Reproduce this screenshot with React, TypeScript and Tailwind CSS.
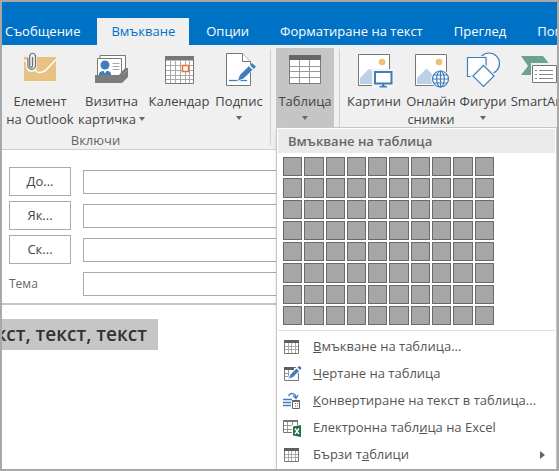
import React from "react";

const tabs = ["Съобщение", "Вмъкване", "Опции", "Форматиране на текст", "Преглед", "Помощ"];

const recipients = [
  { id: "to", label: "До..." },
  { id: "cc", label: "Як..." },
  { id: "bcc", label: "Ск..." },
];

function AttachItemIcon() {
  return (
    <svg className="h-9 w-9 overflow-visible" viewBox="0 0 36 36" fill="none">
      <path d="M2 6h32v24H2z" fill="#e8c282" />
      <path d="M2 9c7 5 9 11 15 12.500C24 22 28 14 34 8.500" stroke="#fff" strokeWidth="1.5" />
      <path d="M10.5 6v9a1.5 1.5 0 01-3 0V5a3 3 0 016 0v10.500a4 4 0 01-8 0V8" stroke="#f0f0f0" strokeWidth="3" />
      <path d="M10.5 6v9a1.4 1.4 0 01-2.800 0V4.5a3 3 0 015.800 0v10a3.8 3.8 0 01-7.600 0V7" stroke="#6f6f6f" strokeWidth="1.2" />
    </svg>
  );
}

function CardIcon() {
  return (
    <svg className="h-9 w-9 overflow-visible" viewBox="0 0 36 36" fill="none">
      <path d="M6 4.5h25.500V23H6z" fill="#fff" stroke="#777" />
      <path d="M3.5 7.5h24v18h-24z" fill="#fff" stroke="#777" />
      <circle cx="11" cy="14" r="4.5" fill="#3f7dbd" />
      <path d="M5 24v-1.500c1-2 3-2.500 4.500-2.500L11 22.500l1.500-2.500c2 0 4 .5 4.500 2.500V24z" fill="#3f7dbd" />
      <path d="M18.5 12.5h7M18.5 15.5h7M18.5 18.5h7" stroke="#aaa" />
      <path d="M1 24h24l6-7h3v9l-6 6H1z" fill="#7c7c7c" />
      <path d="M28.5 24l5-5" stroke="#999" />
    </svg>
  );
}

function CalendarIcon() {
  return (
    <svg className="h-9 w-9" viewBox="0 0 36 36" fill="none">
      <path d="M4.5 5.5h28v27h-28z" fill="#fff" stroke="#777" />
      <path d="M4 5h29v4.500H4z" fill="#777" />
      <path d="M9.5 10v22M14.5 10v22M19.5 10v22M24.5 10v22M28.5 10v22M5 14.5h27M5 19.5h27M5 24.5h27M5 28.5h27" stroke="#aaa" />
      <path d="M21.5 14.5h6v6h-6z" fill="#fff" stroke="#e8762c" strokeWidth="1.5" />
    </svg>
  );
}

function SignatureIcon() {
  return (
    <svg className="h-9 w-9 overflow-visible" viewBox="0 0 36 36" fill="none">
      <path d="M5.5 2.5h16l8 8v24h-24z" fill="#fff" stroke="#777" />
      <path d="M21.5 2.5v8h8" fill="#fff" stroke="#777" />
      <path d="M8 29.5h18" stroke="#3f7dbd" strokeWidth="1.3" />
      <path d="M16 31l2-6.500L30 12.500l4.500 4L22 28.500z" fill="#f6f6f6" />
      <path d="M17 29.500l2-5.500 8.800-8.800 3.700 3.600-9 8.800z" fill="#3f7dbd" />
      <path d="M29 14l2-2 4 3.700-2.300 2.200z" fill="#3f7dbd" />
    </svg>
  );
}

function TableIcon() {
  return (
    <svg className="h-9 w-9" viewBox="0 0 36 36" fill="none">
      <path d="M2.5 4.5h31v28h-31z" fill="#fff" stroke="#7a7a7a" />
      <path d="M2 4h32v5H2z" fill="#666" />
      <path d="M12.5 9v23M22.5 9v23M3 15.5h30M3 20.5h30M3 26.5h30" stroke="#999" />
    </svg>
  );
}

function PictureBase() {
  return (
    <>
      <path d="M2.5 3.5h31v31h-31z" fill="#fff" stroke="#777" />
      <circle cx="26" cy="11" r="3.3" fill="#ecc075" />
      <path d="M4 33v-6l9-9h1l9 9v6z" fill="#bcd0e7" />
    </>
  );
}

function PicturesIcon() {
  return (
    <svg className="h-9 w-9 overflow-visible" viewBox="0 0 36 36" fill="none">
      <PictureBase />
      <path d="M16 18h22v19H16z" fill="#f4f4f4" />
      <path d="M19 21h16.500v11.500H19z" fill="#fff" stroke="#3f7dbd" strokeWidth="2" />
      <path d="M26 33h2.500v2H31v1.500h-7.500V35H26z" fill="#3f7dbd" />
    </svg>
  );
}

function OnlinePicturesIcon() {
  return (
    <svg className="h-9 w-9 overflow-visible" viewBox="0 0 36 36" fill="none">
      <PictureBase />
      <circle cx="27.5" cy="28" r="9.5" fill="#f4f4f4" />
      <g stroke="#3f7dbd" strokeWidth="1.2">
        <circle cx="27.5" cy="28" r="8" fill="#fff" />
        <ellipse cx="27.5" cy="28" rx="3.8" ry="8" />
        <path d="M27.5 20v16M19.5 28h16M21 24h13M21 32h13" />
      </g>
    </svg>
  );
}

function ShapesIcon() {
  return (
    <svg className="h-9 w-9 overflow-visible" viewBox="0 0 36 36" fill="none" stroke="#3f7dbd" strokeWidth="1.2">
      <circle cx="24" cy="12.5" r="10.5" fill="#fafafa" />
      <path d="M2.5 6.5h18.500v19H2.500z" fill="#fff" stroke="#f0f0f0" strokeWidth="3" />
      <path d="M2.5 6.5h18.500v19H2.500z" fill="#fff" />
      <path d="M18.5 14.5l10.500 10.500-10.500 10.500L8 25z" fill="#fff" stroke="#f0f0f0" strokeWidth="4" />
      <path d="M18.5 14.5l10.500 10.500-10.500 10.500L8 25z" fill="#fff" />
    </svg>
  );
}

function SmartArtIcon() {
  return (
    <svg className="h-9 w-9 overflow-visible" viewBox="0 0 36 36" fill="none">
      <path d="M1 5h22l8 10-8 9H1l7-9z" fill="#6ba292" />
      <path d="M11 12h26v21H11z" fill="#f0f0f0" />
      <path d="M12.5 14.5h24v17h-24z" fill="#fff" stroke="#777" />
      <path d="M15 19.5h2M15 23.5h2M15 27.5h2M19 19.5h14M19 23.5h14M19 27.5h14" stroke="#888" />
    </svg>
  );
}

function SmallTableIcon() {
  return (
    <svg className="h-[18px] w-[18px]" viewBox="0 0 18 18" fill="none">
      <path d="M1.5 2.5h14v13h-14z" fill="#fff" stroke="#777" />
      <path d="M1 2h15v3H1z" fill="#5f5f5f" />
      <path d="M5.5 5v10M8.5 5v10M12.5 5v10M2 8.5h13M2 11.5h13" stroke="#aaa" />
    </svg>
  );
}

function DrawTableIcon() {
  return (
    <svg className="h-[18px] w-[18px] overflow-visible" viewBox="0 0 18 18" fill="none">
      <path d="M1.5 2.5h14v13h-14z" fill="#fff" stroke="#777" />
      <path d="M1 2h10v3H1z" fill="#5f5f5f" />
      <path d="M5.5 5v10M2 8.5h4M2 11.5h4" stroke="#999" />
      <path d="M4.5 15l1.500-5L15.500 0l4 3.500-9.500 10z" fill="#fff" />
      <path d="M6 13.500l1.500-4 6-6 2.500 2.500-6 6zM14.500 2.500l1.800-1.800 2.400 2.400L17 5z" fill="#3f7dbd" />
    </svg>
  );
}

function ConvertTextIcon() {
  return (
    <svg className="h-[18px] w-[18px] overflow-visible" viewBox="0 0 18 18" fill="none">
      <path d="M0 7.5h9M0 10.5h8M0 13.5h8" stroke="#3f7dbd" strokeWidth="1.5" />
      <path d="M5.5 4C7 .5 12.500.5 13 5.500M10 3.500l3 3 2-3.500" stroke="#3f7dbd" strokeWidth="1.3" />
      <path d="M9.5 8.5h7v8h-7z" fill="#fff" stroke="#666" />
      <path d="M9 8h8v2H9z" fill="#666" />
      <path d="M12 11.5h1M14 11.5h1M12 14h1M14 14h1" stroke="#666" />
    </svg>
  );
}

function ExcelIcon() {
  return (
    <svg className="h-[18px] w-[18px] overflow-visible" viewBox="0 0 18 18" fill="none">
      <path d="M.5 1.5h14v12H.5z" fill="#fff" stroke="#777" />
      <path d="M0 1h15v2H0z" fill="#777" />
      <path d="M4.5 3v10M9.5 3v10M1 6.5h13M1 10.5h13" stroke="#999" />
      <path d="M9 6h10v13H9z" fill="#fff" />
      <path d="M10 7.500l8-1.500v12l-8-1.500z" fill="#1e7145" />
      <path d="M12 9.500l4 5.500M16 9.500L12 15" stroke="#fff" strokeWidth="1.4" />
    </svg>
  );
}

function Caret() {
  return (
    <svg className="inline-block h-1 w-1.5" viewBox="0 0 6 4">
      <path d="M0 0h6L3 4z" fill="#666" />
    </svg>
  );
}

type RibbonButtonProps = {
  icon: React.ReactNode;
  className: string;
  children: React.ReactNode;
};

function RibbonButton({ icon, className, children }: RibbonButtonProps) {
  return (
    <button
      type="button"
      className={`flex h-20 shrink-0 flex-col items-center gap-[5px] whitespace-nowrap pt-[3px] leading-[18px] ${className}`}
    >
      {icon}
      <span className="flex flex-col items-center">{children}</span>
    </button>
  );
}

function Divider() {
  return <div className="mt-1 h-24 w-px shrink-0 bg-[#d0d0d0]" />;
}

const menuItems = [
  { icon: <SmallTableIcon />, label: <><u>В</u>мъкване на таблица...</> },
  { icon: <DrawTableIcon />, label: <><u>Ч</u>ертане на таблица</> },
  { icon: <ConvertTextIcon />, label: <><u>К</u>онвертиране на текст в таблица...</> },
  { icon: <ExcelIcon />, label: <>Електронна табл<u>и</u>ца на Excel</> },
  { icon: <SmallTableIcon />, label: <>Бързи т<u>а</u>блици</>, submenu: true },
];

function TableMenu() {
  return (
    <div className="absolute left-0 top-full z-10 w-[281px] border border-[#c6c6c6] bg-white p-px text-[#555] shadow-md">
      <h2 className="bg-[#eaeaea] pl-[10px] font-semibold leading-6 text-[#666]">Вмъкване на таблица</h2>
      <div className="ml-[5px] mt-1 grid h-[168px] w-[211px] grid-cols-10 grid-rows-8 gap-[2px]">
        {Array.from({ length: 80 }, (_, i) => (
          <div key={i} className="border border-[#6a6a6a] bg-[#a6a6a8]" />
        ))}
      </div>
      <ul className="mt-[5px] border-t border-[#e0e0e0] pt-[2px]">
        {menuItems.map((item, i) => (
          <li key={i}>
            <button type="button" className="flex h-[27px] w-full items-center gap-3 whitespace-nowrap pl-[5px] pr-[10px] text-left">
              {item.icon}
              <span className="flex-1">{item.label}</span>
              {item.submenu && (
                <svg className="h-2 w-[5px]" viewBox="0 0 5 8">
                  <path d="M0 0l5 4-5 4z" fill="#666" />
                </svg>
              )}
            </button>
          </li>
        ))}
      </ul>
    </div>
  );
}

export default function App() {
  return (
    <div className="flex min-h-screen flex-col overflow-hidden border-2 border-[#a8a8a8] bg-white font-['Open_Sans','Noto_Sans',sans-serif] text-[13px] text-[#444]">
      <nav className="flex gap-[3px] overflow-hidden bg-[#0072c6] pt-4">
        {tabs.map((tab, i) => (
          <button
            key={tab}
            type="button"
            className={`h-[27px] shrink-0 whitespace-nowrap pr-[14px] ${i === 0 ? "pl-[3px]" : "pl-[14px]"} ${
              tab === "Вмъкване" ? "bg-[#f0f0f0] text-[#0072c6]" : "text-white"
            }`}
          >
            {tab}
          </button>
        ))}
      </nav>

      <div className="flex h-[105px] border-b border-[#d0d0d0] bg-[#f0f0f0] pl-[2px]">
        <div className="mr-[3px] shrink-0 pt-[3px]">
          <div className="flex">
            <RibbonButton icon={<AttachItemIcon />} className="w-[72px]">
              <span>Елемент</span>
              <span>на Outlook</span>
            </RibbonButton>
            <RibbonButton icon={<CardIcon />} className="w-[71px]">
              <span>Визитна</span>
              <span className="flex items-center gap-[3px]">
                картичка <Caret />
              </span>
            </RibbonButton>
            <RibbonButton icon={<CalendarIcon />} className="w-[64px]">
              <span>Календар</span>
            </RibbonButton>
            <RibbonButton icon={<SignatureIcon />} className="w-[56px]">
              <span>Подпис</span>
              <span className="flex h-4 items-center">
                <Caret />
              </span>
            </RibbonButton>
          </div>
          <div className="pr-20 text-center leading-6 text-[#666]">Включи</div>
        </div>
        <Divider />
        <div className="relative mx-[5px] mt-[3px] h-[79px] shrink-0">
          <RibbonButton icon={<TableIcon />} className="w-[58px] bg-[#c5c5c5]">
            <span>Таблица</span>
            <span className="flex h-4 items-center">
              <Caret />
            </span>
          </RibbonButton>
          <TableMenu />
        </div>
        <Divider />
        <div className="flex min-w-0 flex-1 overflow-hidden pl-[5px] pt-[3px]">
          <RibbonButton icon={<PicturesIcon />} className="w-[58px]">
            <span>Картини</span>
          </RibbonButton>
          <RibbonButton icon={<OnlinePicturesIcon />} className="w-[56px]">
            <span>Онлайн</span>
            <span>снимки</span>
          </RibbonButton>
          <RibbonButton icon={<ShapesIcon />} className="w-[48px]">
            <span>Фигури</span>
            <span className="flex h-4 items-center">
              <Caret />
            </span>
          </RibbonButton>
          <RibbonButton icon={<SmartArtIcon />} className="w-[62px]">
            <span>SmartArt</span>
          </RibbonButton>
        </div>
      </div>

      <form className="flex flex-col gap-[5px] border-b-2 border-[#c6c6c6] pb-[5px] pl-[7px] pt-[17px]">
        {recipients.map(({ id, label }) => (
          <div key={id} className="flex items-center gap-3">
            <button type="button" id={`${id}-label`} className="h-[29px] w-[62px] border border-[#ababab]">
              {label}
            </button>
            <input
              type="text"
              aria-labelledby={`${id}-label`}
              className="h-6 min-w-0 flex-1 border border-[#ababab] px-1"
            />
          </div>
        ))}
        <div className="flex h-[29px] items-center gap-3">
          <label htmlFor="subject" className="w-[62px] text-xs text-[#666]">
            Тема
          </label>
          <input id="subject" type="text" className="h-6 min-w-0 flex-1 border border-[#ababab] px-1" />
        </div>
      </form>

      <div className="flex-1 pt-[14px]">
        <p className="flex w-[156px] justify-end overflow-hidden whitespace-nowrap bg-[#c6c6c6] pr-[11px] text-[19px] font-semibold leading-[31px] text-[#333]">
          текст, текст, текст
        </p>
      </div>
    </div>
  );
}
